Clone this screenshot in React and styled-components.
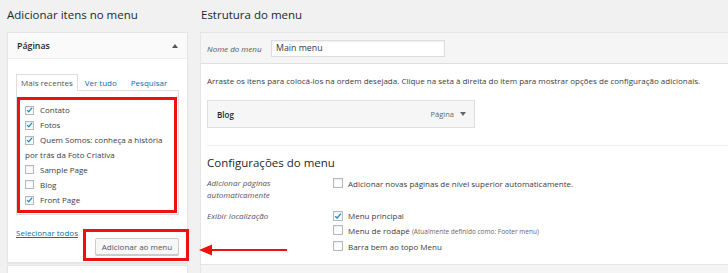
import React from "react";
import styled, { createGlobalStyle } from "styled-components";

const GlobalStyle = createGlobalStyle`
  html, body { margin: 0; padding: 0; background: #f1f1f1; }
  body {
    width: 728px; height: 273px; overflow: hidden;
    font-family: "Open Sans", "Noto Sans", sans-serif;
    font-size: 8px; color: #3c3c3c;
  }
`;

const Page = styled.div`
  position: relative;
  display: flex;
  gap: 12px;
  padding-left: 7px;
  height: 273px;
  overflow: hidden;
`;

const LeftCol = styled.div`
  width: 181px;
  flex-shrink: 0;
  display: flex;
  flex-direction: column;
`;

const RightCol = styled.div`
  flex: 0 0 560px;
  display: flex;
  flex-direction: column;
`;

const Title = styled.h2`
  margin: 0;
  height: 32px;
  line-height: 30px;
  font-size: 11.5px;
  font-weight: 400;
  color: #23282d;
  padding-left: ${(p) => p.$indent || 0}px;
`;

const Box = styled.div`
  background: #fff;
  border: 1px solid #e5e5e5;
  box-shadow: 0 1px 1px rgba(0, 0, 0, 0.04);
`;

const AccHeader = styled.div`
  height: 25px;
  background: #fafafa;
  border-bottom: 1px solid #eee;
  display: flex;
  align-items: center;
  justify-content: space-between;
  padding: 0 9px;
  font-size: 8.8px;
  font-weight: 600;
  color: #23282d;
`;

const UpArrow = styled.span`
  width: 0; height: 0;
  border-left: 3px solid transparent;
  border-right: 3px solid transparent;
  border-bottom: 4px solid #555;
`;

const DownArrow = styled.span`
  display: inline-block;
  width: 0; height: 0;
  border-left: 3px solid transparent;
  border-right: 3px solid transparent;
  border-top: 4px solid #666;
`;

const AccBody = styled.div`
  padding: 15px 8px 1px 8px;
`;

const Tabs = styled.div`
  display: flex;
  align-items: flex-end;
  height: 16px;
`;

const Tab = styled.span`
  height: 16px;
  line-height: 16px;
  padding: 0 ${(p) => (p.$active ? 4 : 0)}px;
  margin-left: ${(p) => p.$gap || 0}px;
  color: ${(p) => (p.$active ? "#555" : "#0073aa")};
  background: ${(p) => (p.$active ? "#fff" : "transparent")};
  border: 1px solid ${(p) => (p.$active ? "#ddd" : "transparent")};
  border-bottom: none;
  position: relative;
  z-index: 1;
  margin-bottom: -1px;
`;

const ListBox = styled.div`
  border: 1px solid #ddd;
  padding: 6px 1px 1px 0;
`;

const RedFrame = styled.div`
  border: 3px solid #ee1111;
  padding: ${(p) => p.$pad};
  margin: ${(p) => p.$margin || 0};
`;

const Item = styled.div`
  line-height: 15px;
`;

const Check = styled.span`
  display: inline-flex;
  align-items: center;
  justify-content: center;
  width: 9px;
  height: 9px;
  border: 1px solid #b4b9be;
  background: #fff;
  box-shadow: inset 0 1px 2px rgba(0, 0, 0, 0.08);
  box-sizing: border-box;
  vertical-align: -1px;
  margin-right: 6px;
`;

const CheckMark = () => (
  <svg width="8" height="8" viewBox="0 0 8 8">
    <path d="M1.2 4.2 L3.1 6 L6.9 1.6" fill="none" stroke="#1e8cbe" strokeWidth="1.4" />
  </svg>
);

const CheckBox = ({ checked }) => <Check>{checked && <CheckMark />}</Check>;

const Footer = styled.div`
  display: flex;
  justify-content: space-between;
  align-items: flex-start;
  margin-top: 10px;
`;

const LinkText = styled.span`
  line-height: 15px;
  color: #0073aa;
  text-decoration: underline;
`;

const Button = styled.span`
  display: block;
  box-sizing: border-box;
  width: 84px;
  height: 17px;
  line-height: 15px;
  text-align: center;
  background: #f7f7f7;
  border: 1px solid #ccc;
  border-radius: 2px;
  box-shadow: 0 1px 0 #ccc;
  color: #555;
`;

const NextBox = styled(Box)`
  margin-top: 2px;
  flex: 1;
  border-bottom: none;
`;

const EditBox = styled(Box)`
  border-right: none;
  border-bottom: none;
  flex: 1;
  display: flex;
  flex-direction: column;
`;

const EditHeader = styled.div`
  height: 30px;
  background: #f5f5f5;
  border-bottom: 1px solid #dfdfdf;
  display: flex;
  align-items: center;
  padding-left: 6px;
`;

const FieldLabel = styled.span`
  width: 64px;
  font-style: italic;
  color: #555;
`;

const Input = styled.div`
  box-sizing: border-box;
  width: 174px;
  height: 17px;
  line-height: 15px;
  border: 1px solid #ddd;
  background: #fff;
  padding-left: 4px;
  font-size: 8.8px;
  color: #32373c;
  box-shadow: inset 0 1px 2px rgba(0, 0, 0, 0.07);
`;

const EditBody = styled.div`
  padding: 9px 6px 10px 6px;
  border-bottom: 1px solid #e5e5e5;
`;

const Para = styled.p`
  margin: 0;
  line-height: 15px;
`;

const MenuItem = styled.div`
  box-sizing: border-box;
  width: 268px;
  height: 28px;
  margin-top: 12px;
  background: #f6f6f6;
  border: 1px solid #dfdfdf;
  display: flex;
  align-items: center;
  padding: 0 8px 0 9px;
  gap: 6px;
`;

const ItemTitle = styled.span`
  flex: 1;
  font-weight: 600;
  color: #23282d;
`;

const ItemType = styled.span`
  font-size: 7.5px;
  color: #666;
`;

const Separator = styled.hr`
  margin: 17px 0 0 0;
  border: none;
  border-top: 1px solid #eee;
`;

const SubTitle = styled.h3`
  margin: 9px 0 0 0;
  font-size: 11.5px;
  line-height: 16px;
  font-weight: 400;
  color: #23282d;
`;

const Settings = styled.div`
  display: grid;
  grid-template-columns: 126px 1fr;
  margin-top: ${(p) => p.$top}px;
`;

const SetLabel = styled.div`
  font-style: italic;
  color: #555;
  line-height: ${(p) => p.$lh}px;
`;

const Options = styled.div`
  line-height: 15px;
  margin-top: ${(p) => p.$shift || 0}px;
`;

const Check10 = styled(Check)`
  width: 10px;
  height: 10px;
  margin-right: 5px;
`;

const Small = styled.span`
  font-size: 6.5px;
  color: #666;
`;

const ArrowSvg = styled.svg`
  position: absolute;
  left: 196px;
  top: 243px;
`;

const Footing = styled.div`
  flex: 1;
  background: #f5f5f5;
`;

export default function App() {
  return (
    <>
      <GlobalStyle />
      <Page>
        <LeftCol>
          <Title>Adicionar itens no menu</Title>
          <Box>
            <AccHeader>
              <span>Páginas</span>
              <UpArrow />
            </AccHeader>
            <AccBody>
              <Tabs>
                <Tab $active>Mais recentes</Tab>
                <Tab $gap={6}>Ver tudo</Tab>
                <Tab $gap={12}>Pesquisar</Tab>
              </Tabs>
              <ListBox>
                <RedFrame $pad="2px 0 3px 5px">
                  <Item><CheckBox checked />Contato</Item>
                  <Item><CheckBox checked />Fotos</Item>
                  <Item><CheckBox checked />Quem Somos: conheça a história<br />por trás da Foto Criativa</Item>
                  <Item><CheckBox />Sample Page</Item>
                  <Item><CheckBox />Blog</Item>
                  <Item><CheckBox checked />Front Page</Item>
                </RedFrame>
              </ListBox>
              <Footer>
                <LinkText>Selecionar todos</LinkText>
                <RedFrame $pad="6px 7px 3px 9px" $margin="4px -10px 0 0">
                  <Button>Adicionar ao menu</Button>
                </RedFrame>
              </Footer>
            </AccBody>
          </Box>
          <NextBox />
        </LeftCol>
        <RightCol>
          <Title $indent={1}>Estrutura do menu</Title>
          <EditBox>
            <EditHeader>
              <FieldLabel>Nome do menu</FieldLabel>
              <Input>Main menu</Input>
            </EditHeader>
            <EditBody>
              <Para>
                Arraste os itens para colocá-los na ordem desejada. Clique na seta à direita do item para mostrar opções de configuração adicionais.
              </Para>
              <MenuItem>
                <ItemTitle>Blog</ItemTitle>
                <ItemType>Página</ItemType>
                <DownArrow />
              </MenuItem>
              <Separator />
              <SubTitle>Configurações do menu</SubTitle>
              <Settings $top={6}>
                <SetLabel $lh={12}>Adicionar páginas<br />automaticamente</SetLabel>
                <Options $shift={-1.5}>
                  <div><Check10 />Adicionar novas páginas de nível superior automaticamente.</div>
                </Options>
              </Settings>
              <Settings $top={7}>
                <SetLabel $lh={15}>Exibir localização</SetLabel>
                <Options>
                  <div><Check10><CheckMark /></Check10>Menu principal</div>
                  <div><Check10 />Menu de rodapé <Small>(Atualmente definido como: Footer menu)</Small></div>
                  <div><Check10 />Barra bem ao topo Menu</div>
                </Options>
              </Settings>
            </EditBody>
            <Footing />
          </EditBox>
        </RightCol>
        <ArrowSvg width="95" height="14" viewBox="0 0 95 14">
          <line x1="14" y1="7" x2="91" y2="7" stroke="#ee1111" strokeWidth="2" />
          <polygon points="3,7 16,1.5 16,12.5" fill="#ee1111" />
        </ArrowSvg>
      </Page>
    </>
  );
}
